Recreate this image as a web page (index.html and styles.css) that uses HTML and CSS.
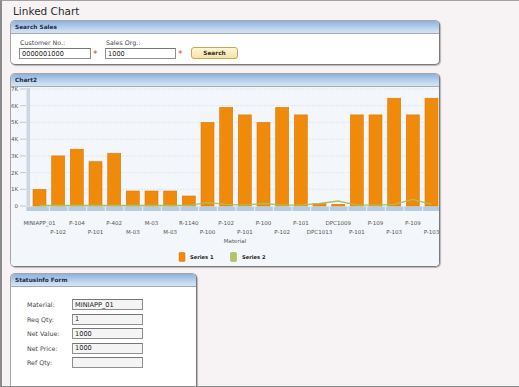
FILE: index.html
```html
<!DOCTYPE html>
<html>
<head>
<meta charset="utf-8">
<link rel="stylesheet" href="styles.css">
</head>
<body>
<div class="page">
  <h1 class="title">Linked Chart</h1>

  <section class="panel search-panel">
    <div class="panel-head">Search Sales</div>
    <div class="search-body">
      <div class="field">
        <label>Customer No.:</label>
        <input class="inp cust" value="0000001000">
      </div>
      <span class="req req1">*</span>
      <div class="field">
        <label>Sales Org.:</label>
        <input class="inp org" value="1000">
      </div>
      <span class="req req2">*</span>
      <button class="btn">Search</button>
    </div>
  </section>

  <section class="panel chart-panel">
    <div class="panel-head">Chart2</div>
    <div class="chart-body">
      <svg class="chart" width="428" height="179" viewBox="11 87 428 179">
        <g class="grid">
          <line x1="30" y1="89" x2="439" y2="89"/>
          <line x1="30" y1="105.7" x2="439" y2="105.7"/>
          <line x1="30" y1="122.4" x2="439" y2="122.4"/>
          <line x1="30" y1="139.2" x2="439" y2="139.2"/>
          <line x1="30" y1="155.9" x2="439" y2="155.9"/>
          <line x1="30" y1="172.6" x2="439" y2="172.6"/>
          <line x1="30" y1="189.3" x2="439" y2="189.3"/>
        </g>
        <g class="ticks">
          <line x1="20" y1="89" x2="26" y2="89"/>
          <line x1="20" y1="105.7" x2="26" y2="105.7"/>
          <line x1="20" y1="122.4" x2="26" y2="122.4"/>
          <line x1="20" y1="139.2" x2="26" y2="139.2"/>
          <line x1="20" y1="155.9" x2="26" y2="155.9"/>
          <line x1="20" y1="172.6" x2="26" y2="172.6"/>
          <line x1="20" y1="189.3" x2="26" y2="189.3"/>
          <line x1="20" y1="206" x2="26" y2="206"/>
        </g>
        <g class="ylab">
          <text x="18" y="91">7K</text>
          <text x="18" y="107.7">6K</text>
          <text x="18" y="124.4">5K</text>
          <text x="18" y="141.2">4K</text>
          <text x="18" y="157.9">3K</text>
          <text x="18" y="174.6">2K</text>
          <text x="18" y="191.3">1K</text>
          <text x="18" y="208">0</text>
        </g>
        <rect class="yaxis" x="26.5" y="88" width="3.5" height="118"/>
        <rect class="xaxis" x="26.5" y="206.5" width="412.5" height="4.5"/>
        <g class="xsep">
          <line x1="49.3" y1="206.5" x2="49.3" y2="211"/>
          <line x1="68" y1="206.5" x2="68" y2="211"/>
          <line x1="86.7" y1="206.5" x2="86.7" y2="211"/>
          <line x1="105.3" y1="206.5" x2="105.3" y2="211"/>
          <line x1="124" y1="206.5" x2="124" y2="211"/>
          <line x1="142.7" y1="206.5" x2="142.7" y2="211"/>
          <line x1="161.3" y1="206.5" x2="161.3" y2="211"/>
          <line x1="180" y1="206.5" x2="180" y2="211"/>
          <line x1="198.7" y1="206.5" x2="198.7" y2="211"/>
          <line x1="217.3" y1="206.5" x2="217.3" y2="211"/>
          <line x1="236" y1="206.5" x2="236" y2="211"/>
          <line x1="254.7" y1="206.5" x2="254.7" y2="211"/>
          <line x1="273.3" y1="206.5" x2="273.3" y2="211"/>
          <line x1="292" y1="206.5" x2="292" y2="211"/>
          <line x1="310.7" y1="206.5" x2="310.7" y2="211"/>
          <line x1="329.3" y1="206.5" x2="329.3" y2="211"/>
          <line x1="348" y1="206.5" x2="348" y2="211"/>
          <line x1="366.7" y1="206.5" x2="366.7" y2="211"/>
          <line x1="385.3" y1="206.5" x2="385.3" y2="211"/>
          <line x1="404" y1="206.5" x2="404" y2="211"/>
          <line x1="422.7" y1="206.5" x2="422.7" y2="211"/>
        </g>
        <g class="bars">
          <rect x="33" y="189.3" width="13" height="16.7"/>
          <rect x="51.7" y="155.9" width="13" height="50.1"/>
          <rect x="70.3" y="149.2" width="13" height="56.8"/>
          <rect x="89" y="161.7" width="13" height="44.3"/>
          <rect x="107.7" y="153.4" width="13" height="52.6"/>
          <rect x="126.3" y="191" width="13" height="15"/>
          <rect x="145" y="191" width="13" height="15"/>
          <rect x="163.7" y="191" width="13" height="15"/>
          <rect x="182.3" y="196" width="13" height="10"/>
          <rect x="201" y="122.4" width="13" height="83.6"/>
          <rect x="219.7" y="107.4" width="13" height="98.6"/>
          <rect x="238.3" y="114.9" width="13" height="91.1"/>
          <rect x="257" y="122.4" width="13" height="83.6"/>
          <rect x="275.7" y="107.4" width="13" height="98.6"/>
          <rect x="294.3" y="114.9" width="13" height="91.1"/>
          <rect x="313" y="203.5" width="13" height="2.5"/>
          <rect x="331.7" y="204.3" width="13" height="1.7"/>
          <rect x="350.3" y="114.9" width="13" height="91.1"/>
          <rect x="369" y="114.9" width="13" height="91.1"/>
          <rect x="387.7" y="98.2" width="13" height="107.8"/>
          <rect x="406.3" y="114.9" width="13" height="91.1"/>
          <rect x="425" y="98.2" width="13" height="107.8"/>
        </g>
        <polyline class="line2" points="39.5,205.5 58.2,205.5 76.8,205.5 95.5,205.5 114.2,205.5 132.8,205.5 151.5,205.5 170.2,205.5 188.8,205.3 207.5,202.7 226.2,204.3 244.8,205.2 263.5,203.5 282.2,205.2 300.8,205.2 319.5,203.5 338.2,201 356.8,205.2 375.5,205.2 394.2,204.3 412.8,199.3 431.5,204.3"/>
        <g class="xlab">
          <text x="39.5" y="225">MINIAPP_01</text>
          <text x="76.8" y="225">P-104</text>
          <text x="114.2" y="225">P-402</text>
          <text x="151.5" y="225">M-03</text>
          <text x="188.8" y="225">R-1140</text>
          <text x="226.2" y="225">P-102</text>
          <text x="263.5" y="225">P-100</text>
          <text x="300.8" y="225">P-101</text>
          <text x="338.2" y="225">DPC1009</text>
          <text x="375.5" y="225">P-109</text>
          <text x="412.8" y="225">P-109</text>
          <text x="58.2" y="234">P-102</text>
          <text x="95.5" y="234">P-101</text>
          <text x="132.8" y="234">M-03</text>
          <text x="170.2" y="234">M-03</text>
          <text x="207.5" y="234">P-100</text>
          <text x="244.8" y="234">P-101</text>
          <text x="282.2" y="234">P-102</text>
          <text x="319.5" y="234">DPC1013</text>
          <text x="356.8" y="234">P-101</text>
          <text x="394.2" y="234">P-103</text>
          <text x="431.5" y="234">P-103</text>
          <text x="235" y="243">Material</text>
        </g>
        <g class="legend">
          <rect class="lg1" x="179" y="252.5" width="6" height="9" rx="1"/>
          <text x="190" y="259">Series 1</text>
          <rect class="lg2" x="230.5" y="252.5" width="6" height="9" rx="1"/>
          <text x="242" y="259">Series 2</text>
        </g>
      </svg>
    </div>
  </section>

  <section class="panel status-panel">
    <div class="panel-head">Statusinfo Form</div>
    <div class="status-body">
      <div class="row"><label>Material:</label><input class="inp sinp" value="MINIAPP_01"></div>
      <div class="row"><label>Req Qty:</label><input class="inp sinp" value="1"></div>
      <div class="row"><label>Net Value:</label><input class="inp sinp" value="1000"></div>
      <div class="row"><label>Net Price:</label><input class="inp sinp" value="1000"></div>
      <div class="row"><label>Ref Qty:</label><input class="inp sinp" value=""></div>
    </div>
  </section>
</div>
</body>
</html>
```

FILE: styles.css
```css
html, body {
  margin: 0;
  padding: 0;
  overflow: hidden;
  background: #f7f3f5;
}

.page {
  box-sizing: border-box;
  width: 519px;
  height: 387px;
  border-left: 2px solid #8a8a8a;
  border-top: 1px solid #a0a0a0;
  border-bottom: 1px solid #8a8a8a;
  background: #f7f3f5;
  overflow: hidden;
  font-family: "DejaVu Sans", Verdana, sans-serif;
}

.title {
  margin: 0;
  height: 19px;
  padding: 2px 0 0 11px;
  box-sizing: border-box;
  font-size: 10.5px;
  line-height: 17px;
  font-weight: normal;
  color: #2c2c2c;
}

.panel {
  margin-left: 8px;
  width: 430px;
  box-sizing: border-box;
  border: 1px solid #a6a6a6;
  border-right-color: #7a7a7a;
  border-bottom-color: #7a7a7a;
  border-radius: 5px;
  box-shadow: 1px 1px 1px rgba(0, 0, 0, 0.25);
  background: #fff;
  overflow: hidden;
}

.panel-head {
  height: 12px;
  border-bottom: 1px solid #a3acb6;
  background: linear-gradient(to bottom, #8eb2dd, #c4d8ef 70%, #d6e4f3);
  font-weight: bold;
  font-size: 5.8px;
  line-height: 12px;
  padding-left: 4px;
  color: #1d2b45;
}

.search-panel {
  height: 45px;
}

.search-body {
  display: flex;
  align-items: flex-end;
  padding: 5px 0 0 8px;
}

.field {
  display: flex;
  flex-direction: column;
}

.field label {
  font-size: 6.3px;
  line-height: 8px;
  height: 9px;
  color: #444;
  padding-left: 1px;
}

.inp {
  box-sizing: border-box;
  height: 11px;
  margin: 0;
  padding: 0 2px;
  border: 1px solid #8f8f8f;
  border-top-color: #777;
  background: #fff;
  font-family: "DejaVu Sans", Verdana, sans-serif;
  font-size: 6.6px;
  color: #222;
  outline: none;
}

.cust { width: 72px; }
.org { width: 71px; }

.req {
  color: #d83a3a;
  font-size: 9px;
  line-height: 12px;
  height: 11px;
  padding-left: 2px;
  box-sizing: border-box;
}

.req1 { width: 14px; }
.req2 { width: 15px; }

.btn {
  box-sizing: border-box;
  width: 47px;
  height: 12px;
  margin: 0;
  padding: 0;
  border: 1px solid #c9a45a;
  border-radius: 3px;
  background: linear-gradient(to bottom, #fff6d6, #f6e2a6);
  font-family: "DejaVu Sans", Verdana, sans-serif;
  font-weight: bold;
  font-size: 5.8px;
  color: #2a2a2a;
}

.chart-panel {
  margin-top: 8px;
  height: 194px;
}

.chart-body {
  background: #f3f7fb;
  height: 179px;
}

.chart {
  display: block;
}

.grid line {
  stroke: #d8dee6;
  stroke-width: 0.8;
  stroke-dasharray: 1.5 1.5;
}

.ticks line {
  stroke: #a5aab0;
  stroke-width: 0.6;
}

.ylab text {
  font-family: "DejaVu Sans", Verdana, sans-serif;
  font-size: 5.5px;
  fill: #555;
  text-anchor: end;
}

.yaxis {
  fill: #cad7e5;
}

.xaxis {
  fill: #b8cce0;
}

.xsep line {
  stroke: #eef3f9;
  stroke-width: 1;
}

.bars rect {
  fill: #f08a0a;
  stroke: #d97c05;
  stroke-width: 0.6;
}

.line2 {
  fill: none;
  stroke: #a9c060;
  stroke-width: 1.3;
}

.xlab text {
  font-family: "DejaVu Sans", Verdana, sans-serif;
  font-size: 5.5px;
  fill: #555;
  text-anchor: middle;
}

.legend text {
  font-family: "DejaVu Sans", Verdana, sans-serif;
  font-size: 5.2px;
  font-weight: bold;
  fill: #222;
}

.lg1 {
  fill: #f08a0a;
  stroke: #d47a08;
  stroke-width: 0.5;
}

.lg2 {
  fill: #b6c466;
  stroke: #98a84c;
  stroke-width: 0.5;
}

.status-panel {
  margin-top: 6px;
  width: 187px;
  height: 130px;
}

.status-body {
  display: flex;
  flex-direction: column;
  gap: 3.5px;
  padding: 12px 0 0 16px;
}

.row {
  display: flex;
  align-items: center;
  height: 11px;
}

.row label {
  width: 45px;
  font-size: 6.3px;
  color: #444;
}

.sinp {
  width: 71px;
  height: 11px;
  background: #f4f4f4;
}
```
